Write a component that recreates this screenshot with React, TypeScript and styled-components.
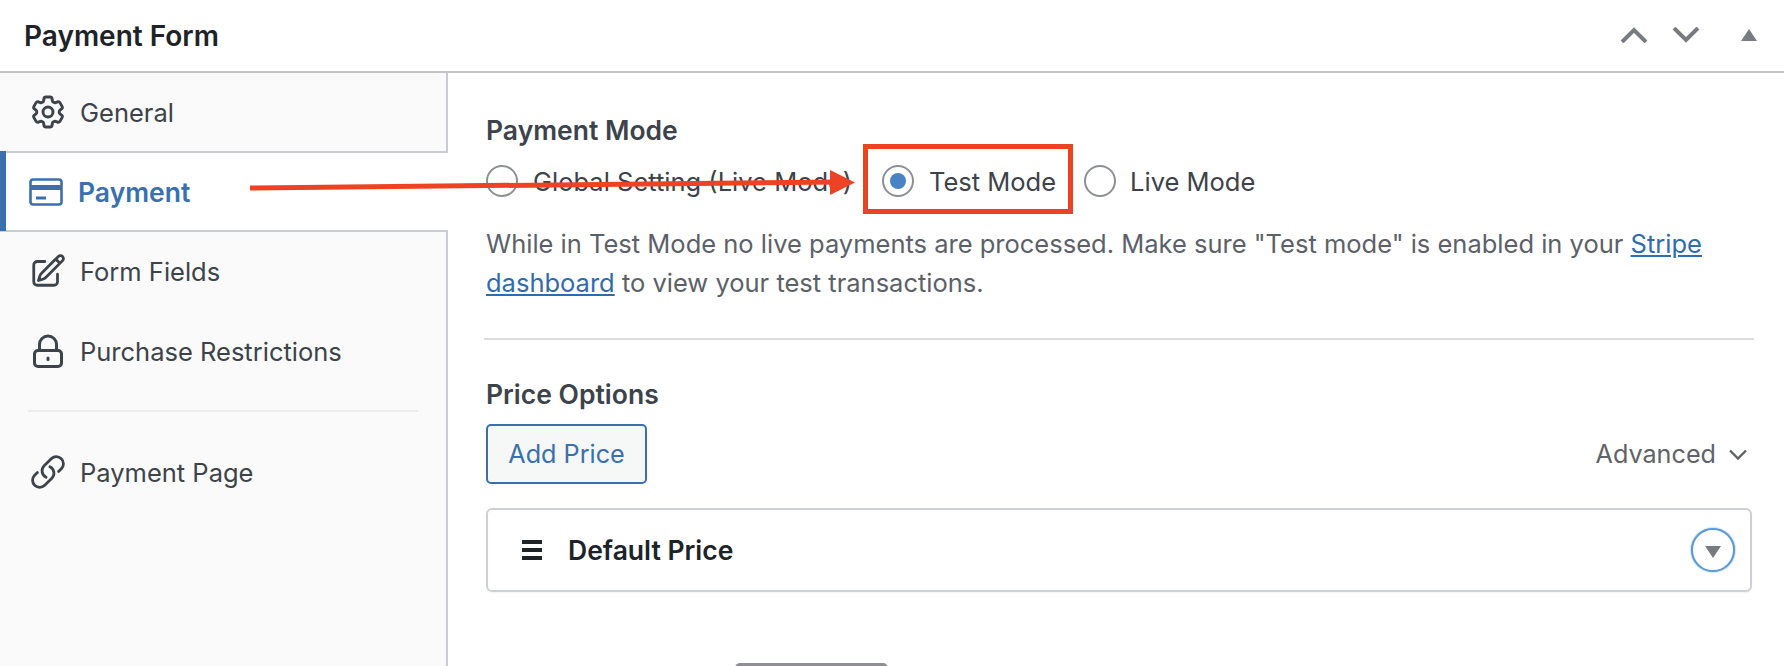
import React from "react";
import styled, { createGlobalStyle } from "styled-components";
import { HiOutlineCog6Tooth, HiOutlineLink, HiOutlinePencilSquare } from "react-icons/hi2";

const Global = createGlobalStyle`
  html, body { margin: 0; padding: 0; background: #fff; }
  * { box-sizing: border-box; }
`;

const Page = styled.div`
  position: relative;
  width: 1784px;
  height: 666px;
  overflow: hidden;
  background: #fff;
  font-family: Inter, "Liberation Sans", sans-serif;
  color: #3c434a;
`;

const Header = styled.header`
  height: 73px;
  border-bottom: 2px solid #c3c4c7;
  display: flex;
  align-items: center;
  justify-content: space-between;
  padding: 1px 27px 0 24px;
`;

const Title = styled.h2`
  margin: 0;
  font-size: 28px;
  font-weight: 600;
  color: #1d2327;
`;

const HeaderActions = styled.div`
  display: flex;
  align-items: center;
  color: #787c82;
  margin-bottom: 2px;
`;

const HeaderIcon = styled.svg<{ $gap?: number }>`
  display: block;
  margin-left: ${(p) => p.$gap ?? 0}px;
`;

const Body = styled.div`
  display: flex;
  height: 593px;
`;

const Sidebar = styled.nav`
  width: 448px;
  flex: none;
  display: flex;
  flex-direction: column;
`;

const TabItem = styled.div<{ $active?: boolean; $h: number }>`
  position: relative;
  height: ${(p) => p.$h}px;
  display: flex;
  align-items: center;
  gap: ${(p) => (p.$active ? 15 : 12)}px;
  padding-left: ${(p) => (p.$active ? 29 : 28)}px;
  background: ${(p) => (p.$active ? "#fff" : "#fafafa")};
  border-right: ${(p) => (p.$active ? "none" : "2px solid #c9ccd0")};
  font-size: ${(p) => (p.$active ? 26.5 : 25.5)}px;
  font-weight: ${(p) => (p.$active ? 600 : 400)};
  color: ${(p) => (p.$active ? "#3a70ad" : "#3c434a")};
  & > svg { flex: none; }
  &::before {
    content: "";
    display: ${(p) => (p.$active ? "block" : "none")};
    position: absolute;
    left: 0;
    top: -2px;
    bottom: -1px;
    width: 6px;
    background: #3a70ad;
  }
`;

const IconSlot = styled.span`
  width: 40px;
  height: 40px;
  flex: none;
  display: flex;
  align-items: center;
  justify-content: center;
`;

const TabBorder = styled.div`
  height: 2px;
  flex: none;
  background: #c9ccd0;
`;

const SideRest = styled.div`
  flex: 1;
  display: flex;
  flex-direction: column;
  background: #fafafa;
  border-right: 2px solid #c9ccd0;
`;

const SideDivider = styled.div`
  height: 2px;
  background: #ececec;
  margin: 18px 28px 0 28px;
`;

const RestTab = styled(TabItem)`
  border-right: none;
  background: transparent;
`;

const Main = styled.main`
  flex: 1;
  padding: 41px 30px 0 38px;
  display: flex;
  flex-direction: column;
`;

const Heading = styled.h3`
  margin: 0;
  font-size: 26.5px;
  line-height: 32px;
  font-weight: 600;
  color: #3c434a;
`;

const RadioRow = styled.div`
  display: flex;
  align-items: center;
  margin-top: 19px;
  height: 32px;
`;

const RadioOption = styled.label<{ $labelGap: number; $after: number }>`
  display: flex;
  align-items: center;
  font-size: 25.5px;
  color: #3c434a;
  gap: ${(p) => p.$labelGap}px;
  margin-right: ${(p) => p.$after}px;
  white-space: nowrap;
`;

const RadioCircle = styled.span<{ $checked?: boolean }>`
  width: 32px;
  height: 32px;
  border-radius: 50%;
  border: 2px solid #8c8f94;
  background: #fff;
  display: flex;
  align-items: center;
  justify-content: center;
  flex: none;
  &::after {
    content: "";
    display: ${(p) => (p.$checked ? "block" : "none")};
    width: 16px;
    height: 16px;
    border-radius: 50%;
    background: #4a82c6;
  }
`;

const Description = styled.p`
  margin: 28px 0 0;
  font-size: 25.5px;
  line-height: 38.5px;
  color: #5c6169;
  width: 1240px;
`;

const DescLink = styled.a`
  color: #2f6cae;
  text-decoration: underline;
`;

const Separator = styled.hr`
  border: 0;
  height: 2px;
  background: #dcdcde;
  margin: 36px 0 0 -2px;
`;

const PriceHeading = styled(Heading)`
  margin-top: 38px;
`;

const PriceActions = styled.div`
  display: flex;
  align-items: center;
  justify-content: space-between;
  margin-top: 14px;
`;

const AddButton = styled.button`
  width: 161px;
  height: 60px;
  background: #f6f7f7;
  border: 2px solid #3a70ad;
  border-radius: 5px;
  color: #3a70ad;
  font-family: inherit;
  font-size: 25.2px;
  padding: 0;
`;

const AdvancedToggle = styled.div`
  display: flex;
  align-items: center;
  gap: 13px;
  margin-right: 7px;
  font-size: 25.2px;
  color: #5f6368;
`;

const PriceCard = styled.div`
  margin-top: 24px;
  height: 84px;
  width: 1266px;
  border: 2px solid #cdd0d4;
  border-radius: 6px;
  background: #fff;
  box-shadow: 0 1px 2px rgba(0, 0, 0, 0.05);
  display: flex;
  align-items: center;
  padding: 0 15px 0 34px;
`;

const DragHandle = styled.div`
  width: 20px;
  height: 20px;
  flex: none;
  display: flex;
  flex-direction: column;
  justify-content: space-between;
  &::before, &::after {
    content: "";
    height: 4px;
    background: #1d2327;
    display: block;
  }
  background: linear-gradient(#1d2327, #1d2327) center / 100% 4px no-repeat;
`;

const CardTitle = styled.span`
  margin-left: 26px;
  font-size: 26.5px;
  font-weight: 600;
  color: #1d2327;
  flex: 1;
`;

const CardToggle = styled.div`
  width: 44px;
  height: 44px;
  border-radius: 50%;
  border: 2px solid #5b9bd5;
  box-shadow: 0 0 2px #5b9bd5;
  display: flex;
  align-items: center;
  justify-content: center;
  background: #fff;
`;

const TriangleDown = styled.div`
  width: 0;
  height: 0;
  margin-top: 3px;
  border-left: 8px solid transparent;
  border-right: 8px solid transparent;
  border-top: 12px solid #787c82;
`;

const HighlightBox = styled.div`
  position: absolute;
  left: 863px;
  top: 144px;
  width: 210px;
  height: 70px;
  border: 5px solid #ee4224;
  pointer-events: none;
`;

const ArrowOverlay = styled.svg`
  position: absolute;
  left: 240px;
  top: 160px;
  pointer-events: none;
`;

const PeekButton = styled.div`
  position: absolute;
  left: 735px;
  top: 663px;
  width: 153px;
  height: 10px;
  background: #8c8f94;
  border-radius: 5px 5px 0 0;
`;

const CardIcon = () => (
  <svg width="34" height="28" viewBox="0 0 34 28" fill="none" stroke="currentColor" strokeWidth="2.6">
    <rect x="1.5" y="1.5" width="31" height="25" rx="2.5" />
    <path d="M1.5 9.5h31" strokeWidth="5" />
    <path d="M7 20h10" strokeWidth="3" />
  </svg>
);

const LockIcon = () => (
  <svg width="40" height="40" viewBox="0 0 40 40" fill="none" stroke="currentColor" strokeWidth="3" strokeLinecap="round" strokeLinejoin="round">
    <rect x="6.5" y="19.5" width="27" height="16" rx="3.5" />
    <path d="M11.5 19.5v-6a8.5 8.5 0 0 1 17 0v6" />
    <path d="M20 27v1.5" />
  </svg>
);

export default function App() {
  return (
    <Page>
      <Global />
      <Header>
        <Title>Payment Form</Title>
        <HeaderActions>
          <HeaderIcon width="28" height="16" viewBox="0 0 28 16" fill="none" stroke="currentColor" strokeWidth="4">
            <path d="M2 15L14 3l12 12" />
          </HeaderIcon>
          <HeaderIcon $gap={24} width="28" height="16" viewBox="0 0 28 16" fill="none" stroke="currentColor" strokeWidth="4">
            <path d="M2 1l12 12L26 1" />
          </HeaderIcon>
          <HeaderIcon $gap={41} width="16" height="12" viewBox="0 0 16 12" fill="currentColor">
            <path d="M8 0l8 12H0z" />
          </HeaderIcon>
        </HeaderActions>
      </Header>
      <Body>
        <Sidebar>
          <TabItem $h={78}>
            <IconSlot>
              <HiOutlineCog6Tooth size={40} style={{ strokeWidth: 1.75 }} />
            </IconSlot>
            General
          </TabItem>
          <TabBorder />
          <TabItem $active $h={77}>
            <CardIcon />
            Payment
          </TabItem>
          <TabBorder />
          <SideRest>
            <RestTab $h={78}>
              <IconSlot>
                <HiOutlinePencilSquare size={38} style={{ strokeWidth: 1.75 }} />
              </IconSlot>
              Form Fields
            </RestTab>
            <RestTab $h={82}>
              <IconSlot>
                <LockIcon />
              </IconSlot>
              Purchase Restrictions
            </RestTab>
            <SideDivider />
            <RestTab $h={120}>
              <IconSlot>
                <HiOutlineLink size={38} style={{ strokeWidth: 1.75 }} />
              </IconSlot>
              Payment Page
            </RestTab>
          </SideRest>
        </Sidebar>
        <Main>
          <Heading>Payment Mode</Heading>
          <RadioRow>
            <RadioOption $labelGap={15} $after={30}>
              <RadioCircle />
              Global Setting (Live Mode)
            </RadioOption>
            <RadioOption $labelGap={15} $after={28}>
              <RadioCircle $checked />
              Test Mode
            </RadioOption>
            <RadioOption $labelGap={14} $after={0}>
              <RadioCircle />
              Live Mode
            </RadioOption>
          </RadioRow>
          <Description>
            While in Test Mode no live payments are processed. Make sure "Test mode" is enabled in your <DescLink>Stripe dashboard</DescLink> to view your test transactions.
          </Description>
          <Separator />
          <PriceHeading>Price Options</PriceHeading>
          <PriceActions>
            <AddButton>Add Price</AddButton>
            <AdvancedToggle>
              Advanced
              <svg width="18" height="11" viewBox="0 0 18 11" fill="none" stroke="currentColor" strokeWidth="2.4">
                <path d="M1 1.5l8 8 8-8" />
              </svg>
            </AdvancedToggle>
          </PriceActions>
          <PriceCard>
            <DragHandle />
            <CardTitle>Default Price</CardTitle>
            <CardToggle>
              <TriangleDown />
            </CardToggle>
          </PriceCard>
        </Main>
      </Body>
      <HighlightBox />
      <ArrowOverlay width="630" height="50" viewBox="0 0 630 50">
        <path d="M10 28L600 22" stroke="#ee4224" strokeWidth="5" fill="none" />
        <path d="M590 10L615 22.5L590 35z" fill="#ee4224" />
      </ArrowOverlay>
      <PeekButton />
    </Page>
  );
}
